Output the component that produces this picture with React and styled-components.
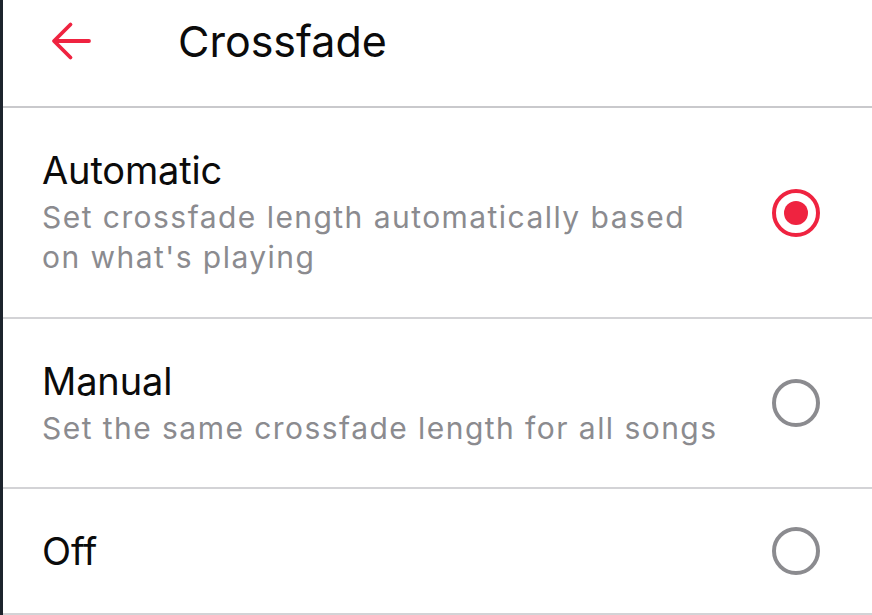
import React from "react";
import styled, { createGlobalStyle } from "styled-components";

const Global = createGlobalStyle`
  html, body { margin: 0; padding: 0; background: #ffffff; }
  body { font-family: Inter, Roboto, "Liberation Sans", sans-serif; -webkit-font-smoothing: antialiased; }
`;

const Page = styled.div`
  box-sizing: border-box;
  height: 615px;
  border-left: 3px solid #1d242d;
  background: #ffffff;
  display: flex;
  flex-direction: column;
  overflow: hidden;
`;

const Header = styled.header`
  box-sizing: border-box;
  height: 108px;
  padding: 15px 0 0 46px;
  display: flex;
  align-items: flex-start;
  border-bottom: 2px solid #c9c9cc;
`;

const HeaderInner = styled.div`
  display: flex;
  align-items: center;
  height: 52px;
`;

const BackButton = styled.button`
  border: 0;
  background: none;
  padding: 0;
  width: 44px;
  height: 44px;
  display: flex;
  align-items: center;
  justify-content: center;
  margin-right: 85px;
  cursor: pointer;
`;

const Title = styled.h1`
  margin: 0;
  font-size: 43px;
  line-height: 52px;
  font-weight: 400;
  color: #0b0b0b;
  letter-spacing: 0;
`;

const Option = styled.div`
  box-sizing: border-box;
  height: ${(p) => p.$h}px;
  padding: 0 52px 0 39px;
  display: flex;
  align-items: center;
  justify-content: space-between;
  border-bottom: 2px solid #d3d3d6;
`;

const Texts = styled.div`
  display: flex;
  flex-direction: column;
  gap: 5px;
`;

const OptionTitle = styled.div`
  font-size: 38px;
  line-height: 44px;
  color: #0b0b0b;
  letter-spacing: -0.15px;
`;

const OptionSub = styled.div`
  font-size: 30px;
  line-height: 40px;
  color: #8b8b8f;
  letter-spacing: 1.45px;
  max-width: 684px;
`;

const Radio = styled.div`
  box-sizing: border-box;
  flex: none;
  width: 48px;
  height: 48px;
  border-radius: 50%;
  border: 4px solid ${(p) => (p.$on ? "#ef2340" : "#8b8b8f")};
  display: flex;
  align-items: center;
  justify-content: center;
  &::after {
    content: "";
    display: ${(p) => (p.$on ? "block" : "none")};
    width: 24px;
    height: 24px;
    border-radius: 50%;
    background: #ef2340;
  }
`;

const options = [
  { title: "Automatic", sub: "Set crossfade length automatically based on what's playing", on: true, h: 212 },
  { title: "Manual", sub: "Set the same crossfade length for all songs", on: false, h: 170 },
  { title: "Off", sub: null, on: false, h: 126 },
];

export default function App() {
  return (
    <>
      <Global />
      <Page>
        <Header>
          <HeaderInner>
            <BackButton aria-label="Back">
              <svg width="40" height="40" viewBox="0 0 40 40" fill="none">
                <path
                  d="M38 20H4M19.5 3.5L3 20L19.5 36.5"
                  stroke="#ef2340"
                  strokeWidth="3.8"
                  strokeLinecap="round"
                  strokeLinejoin="round"
                />
              </svg>
            </BackButton>
            <Title>Crossfade</Title>
          </HeaderInner>
        </Header>
        {options.map((o) => (
          <Option key={o.title} $h={o.h}>
            <Texts>
              <OptionTitle>{o.title}</OptionTitle>
              {o.sub && <OptionSub>{o.sub}</OptionSub>}
            </Texts>
            <Radio $on={o.on} />
          </Option>
        ))}
      </Page>
    </>
  );
}
